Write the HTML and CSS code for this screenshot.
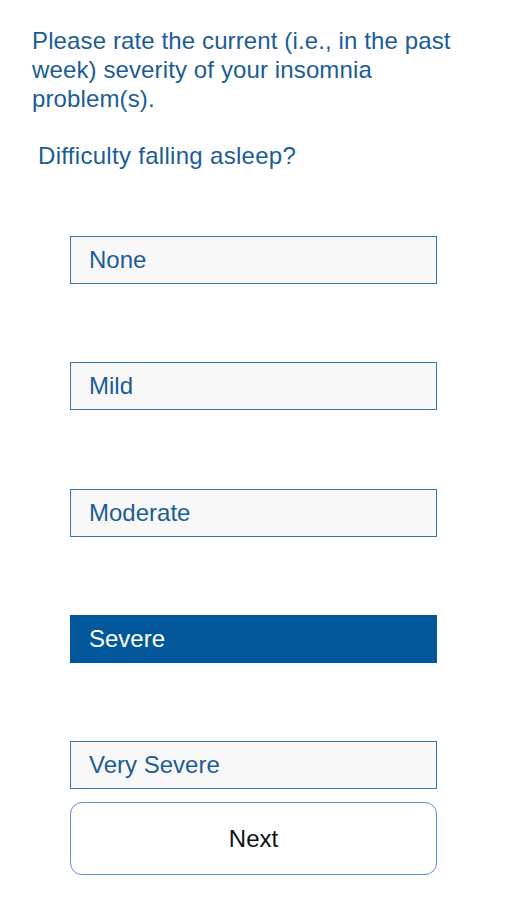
FILE: index.html
```html
<!DOCTYPE html>
<html>
<head>
<meta charset="utf-8">
<link rel="stylesheet" href="styles.css">
</head>
<body>
<div class="page">
  <p class="title">Please rate the current (i.e., in the past week) severity of your insomnia problem(s).</p>
  <p class="question">Difficulty falling asleep?</p>
  <div class="options">
    <div class="option">None</div>
    <div class="option">Mild</div>
    <div class="option">Moderate</div>
    <div class="option selected">Severe</div>
    <div class="option">Very Severe</div>
  </div>
  <div class="next">Next</div>
</div>
</body>
</html>
```
FILE: styles.css
```css
html, body {
  margin: 0;
  padding: 0;
  background: #ffffff;
}
.page {
  font-family: "Liberation Sans", Arial, sans-serif;
  padding: 26px 0 0 0;
  width: 507px;
}
.title {
  margin: 0 0 0 32px;
  width: 440px;
  font-size: 24px;
  letter-spacing: 0.12px;
  line-height: 29px;
  color: #1c5d95;
}
.question {
  margin: 28px 0 0 38px;
  font-size: 24px;
  letter-spacing: 0.3px;
  line-height: 29px;
  color: #1c5d95;
}
.options {
  margin: 66px 0 0 70px;
  display: flex;
  flex-direction: column;
  gap: 78.3px;
}
.option {
  box-sizing: border-box;
  width: 367px;
  height: 48px;
  border: 1.5px solid #3a75a8;
  background: #f8f8f8;
  color: #1c5d95;
  font-size: 24px;
  display: flex;
  align-items: center;
  padding-left: 18px;
}
.option.selected {
  background: #02589a;
  border-color: #02589a;
  color: #ffffff;
}
.next {
  box-sizing: border-box;
  margin: 13px 0 0 70px;
  width: 367px;
  height: 73px;
  border: 1.5px solid #5b8fd2;
  border-radius: 12px;
  display: flex;
  align-items: center;
  justify-content: center;
  font-size: 24px;
  color: #111111;
}
```
